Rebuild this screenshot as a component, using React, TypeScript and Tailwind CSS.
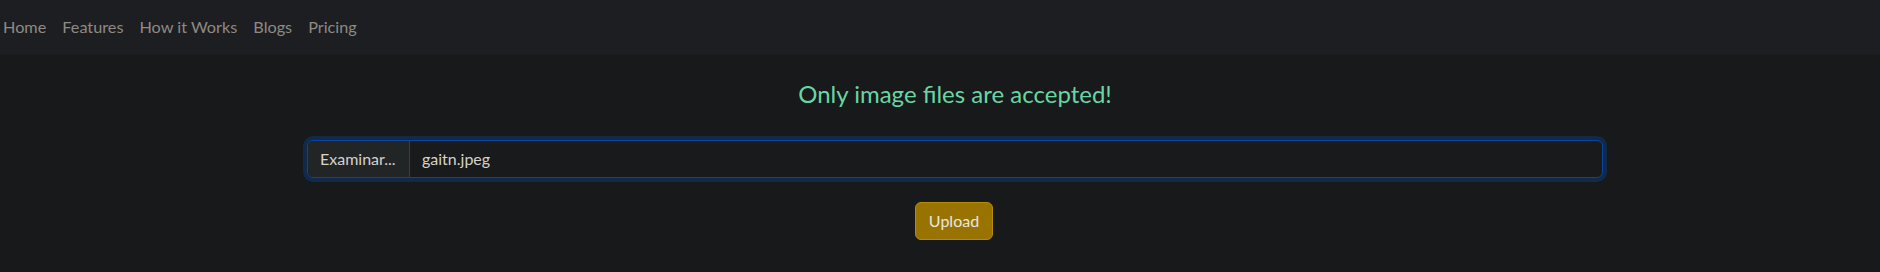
export default function App() {
  const links = ["Home", "Features", "How it Works", "Blogs", "Pricing"];

  return (
    <div className="min-h-[272px] bg-[#18191b] font-['Lato',sans-serif] text-[#e8e6e3]">
      <nav className="h-[55px] bg-[#1c1e21] flex items-center pl-[3px] pb-[2px] gap-4 text-[16.25px]">
        {links.map(l => (
          <a key={l} href="#" className="text-[#8f8a82] leading-6">
            {l}
          </a>
        ))}
      </nav>

      <div className="w-[1296px] ml-[307px] flex flex-col items-center">
        <h4 className="mt-6 text-[24px] leading-[29px] text-[#68d6a3]">
          Only image files are accepted!
        </h4>

        <div className="mt-8 w-full h-[38px] flex rounded-[6px] border border-[#0c4599] bg-[#181a1b] shadow-[0_0_0_4px_#10294d] overflow-hidden text-[16px]">
          <div className="w-[102px] flex items-center px-3 bg-[#222526] border-r border-[#0c4599] text-[#d6d2cc] whitespace-nowrap">
            Examinar...
          </div>
          <div className="flex items-center pl-3 text-[#d6d2cc]">gaitn.jpeg</div>
        </div>

        <button className="mt-6 -ml-[2px] w-[78px] h-[38px] rounded-[6px] bg-[#987300] border border-[#b48c0a] text-[16px] text-[#e8e6e3]">
          Upload
        </button>
      </div>
    </div>
  );
}
